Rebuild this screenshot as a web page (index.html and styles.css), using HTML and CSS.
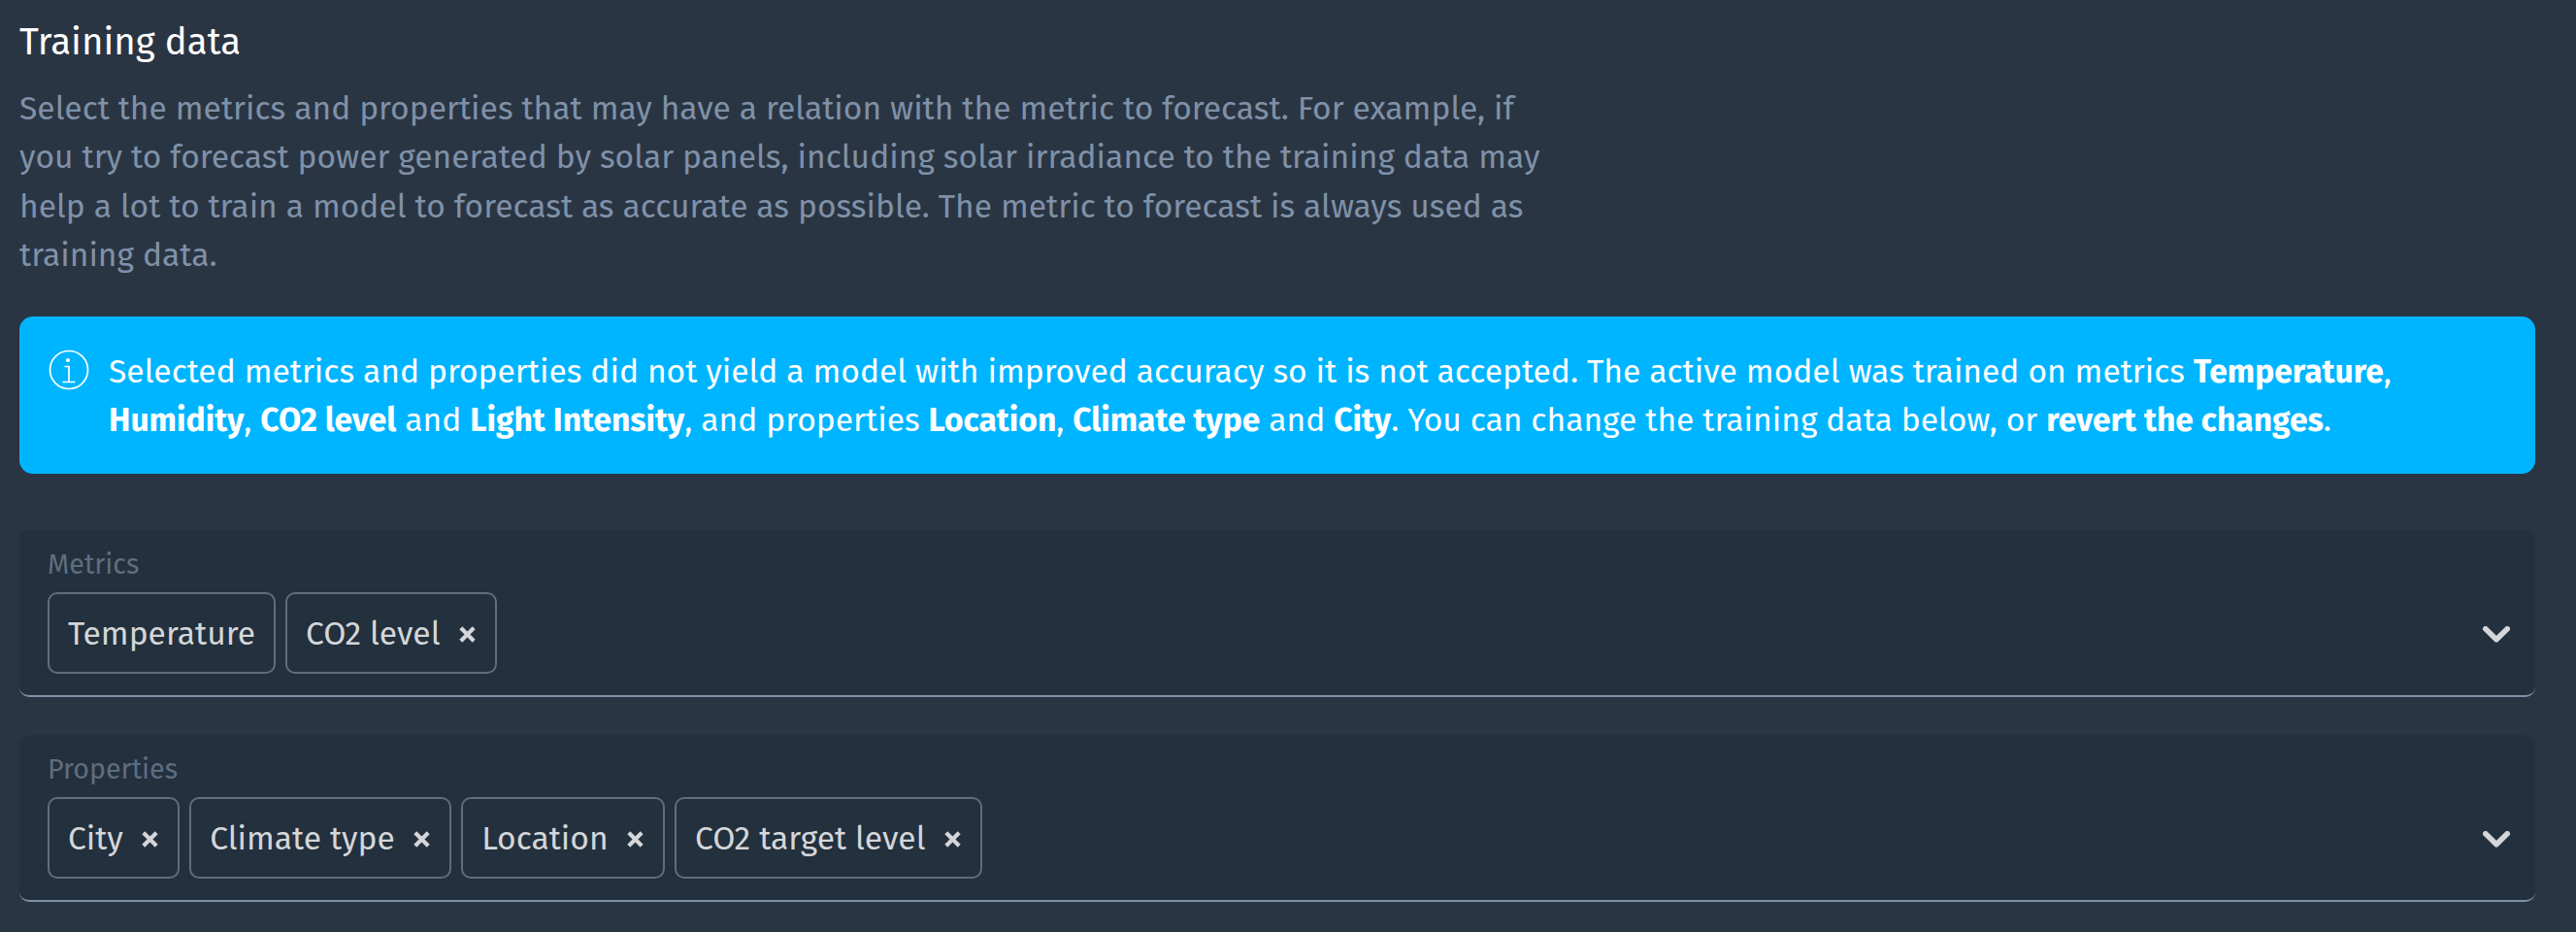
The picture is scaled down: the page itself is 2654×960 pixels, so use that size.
FILE: index.html
```
<!DOCTYPE html>
<html lang="en">
<head>
    <meta charset="UTF-8">
    <meta name="viewport" content="width=device-width, initial-scale=1.0">
    <title>Training data</title>
    <link rel="stylesheet" href="styles.css">
</head>
<body>
    <svg class="sprite" aria-hidden="true">
        <symbol id="cross" viewBox="0 0 17 17">
            <path d="M1.8 1.8l13.4 13.4M15.2 1.8L1.8 15.2" fill="none" stroke="currentColor" stroke-width="4.2"/>
        </symbol>
        <symbol id="chevron" viewBox="0 0 28 17">
            <path d="M2.8 2.8L14 13.8 25.2 2.8" fill="none" stroke="currentColor" stroke-width="5.6" stroke-linecap="round" stroke-linejoin="round"/>
        </symbol>
    </svg>

    <main class="container">
        <h2 class="title">Training data</h2>
        <p class="description">Select the metrics and properties that may have a relation with the metric to forecast. For example, if you try to forecast power generated by solar panels, including solar irradiance to the training data may help a lot to train a model to forecast as accurate as possible. The metric to forecast is always used as training data.</p>

        <div class="alert">
            <svg class="alert-icon" viewBox="0 0 42 42">
                <circle cx="21" cy="21" r="19.5" fill="none" stroke="currentColor" stroke-width="1.7"/>
                <circle cx="20" cy="11" r="2.1" fill="currentColor"/>
                <path d="M16.5 17.5H21V33.5M14.5 33.5H27.5" fill="none" stroke="currentColor" stroke-width="1.7"/>
            </svg>
            <p class="alert-text">Selected metrics and properties did not yield a model with improved accuracy so it is not accepted. The active model was trained on metrics <b>Temperature</b>, <b>Humidity</b>, <b>CO2 level</b> and <b>Light Intensity</b>, and properties <b>Location</b>, <b>Climate type</b> and <b>City</b>. You can change the training data below, or <b>revert the changes</b>.</p>
        </div>

        <div class="select">
            <div class="select-label">Metrics</div>
            <div class="select-row">
                <div class="chips">
                    <span class="chip">Temperature</span>
                    <span class="chip">CO2 level<svg class="cross"><use href="#cross"/></svg></span>
                </div>
                <svg class="chevron"><use href="#chevron"/></svg>
            </div>
        </div>

        <div class="select">
            <div class="select-label">Properties</div>
            <div class="select-row">
                <div class="chips">
                    <span class="chip">City<svg class="cross"><use href="#cross"/></svg></span>
                    <span class="chip">Climate type<svg class="cross"><use href="#cross"/></svg></span>
                    <span class="chip">Location<svg class="cross"><use href="#cross"/></svg></span>
                    <span class="chip">CO2 target level<svg class="cross"><use href="#cross"/></svg></span>
                </div>
                <svg class="chevron"><use href="#chevron"/></svg>
            </div>
        </div>
    </main>
</body>
</html>
```
FILE: styles.css
```
* {
    box-sizing: border-box;
}
body {
    margin: 0;
    min-height: 100vh;
    background-color: #2a3543;
    color: white;
    font-family: "Fira Sans", "Noto Sans", sans-serif;
    font-size: 33.61px;
    line-height: 50.4px;
}
.sprite {
    display: none;
}
.container {
    width: 2612px;
    padding: 18px 0 0 20px;
}
.title {
    margin: 0 0 19px;
    font-size: 38.4px;
    font-weight: 400;
    line-height: 50px;
}
.description {
    max-width: 1600px;
    margin: 0 0 37px;
    color: #7f91a8;
}
.alert {
    display: flex;
    gap: 20px;
    height: 162px;
    margin-bottom: 58px;
    padding: 32px 30px;
    border-radius: 14px;
    background-color: #00b5ff;
}
.alert-icon {
    flex: none;
    width: 42px;
    height: 42px;
    margin-top: 2px;
}
.alert-text {
    margin: 0;
}
.alert-text b {
    font-weight: 700;
}
.select {
    height: 172.6px;
    margin-bottom: 38.4px;
    padding: 17px 26px 0 29px;
    border-bottom: 2px solid #7f91a8;
    border-radius: 10px;
    background-color: #23303d;
}
.select-label {
    color: #5f6d80;
    font-size: 28.65px;
    line-height: 38px;
}
.select-row {
    display: flex;
    justify-content: space-between;
    align-items: center;
    margin-top: 9px;
}
.chips {
    display: flex;
    gap: 10px;
}
.chip {
    display: flex;
    align-items: center;
    height: 84.4px;
    padding: 3px 19px 0;
    border: 2px solid #5f6d80;
    border-radius: 10px;
    color: #d4d6d9;
}
.cross {
    width: 17px;
    height: 17px;
    margin: 1px 1px 0 19.4px;
}
.chevron {
    width: 28px;
    height: 17px;
    margin-top: 3px;
    color: #d4d6d9;
}
```
